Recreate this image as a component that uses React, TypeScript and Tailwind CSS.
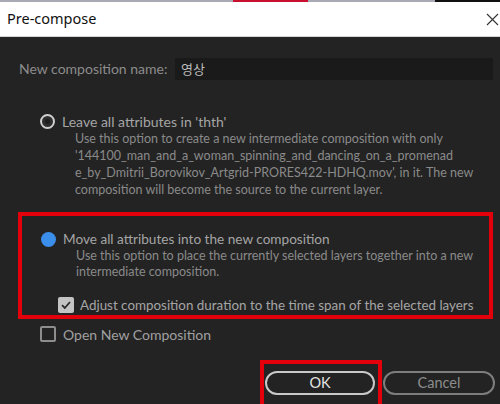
import React from "react";

function Radio({ checked }: { checked: boolean }) {
  if (checked) {
    return <div className="w-[15px] h-[15px] rounded-full bg-[#3b8eea] shrink-0" />;
  }
  return (
    <div className="w-[15px] h-[15px] rounded-full border-[2px] border-[#cfcfcf] bg-[#2e2e2e] shrink-0 flex items-center justify-center">
      <div className="w-[5px] h-[5px] rounded-full bg-[#1e1e1e]" />
    </div>
  );
}

function Check({ checked }: { checked: boolean }) {
  if (checked) {
    return (
      <div className="w-[16px] h-[16px] rounded-[2px] bg-[#c4c4c4] shrink-0 flex items-center justify-center">
        <svg width="12" height="12" viewBox="0 0 12 12">
          <path d="M2 6.2 L4.8 9 L10 3" stroke="#2a2a2a" strokeWidth="1.8" fill="none" />
        </svg>
      </div>
    );
  }
  return <div className="w-[16px] h-[16px] rounded-[2px] border-[2px] border-[#8d8d8d] shrink-0" />;
}

export default function App() {
  return (
    <div className="w-[500px] h-[404px] overflow-hidden bg-[#232323] flex flex-col" style={{ fontFamily: "Lato, 'Noto Sans', sans-serif" }}>
      {/* top strip */}
      <div className="h-[2px] flex shrink-0">
        <div className="w-[233px] bg-[#a9a9b6]" />
        <div className="w-[75px] bg-[#c8102e]" />
        <div className="w-[127px] bg-[#a9a9b6]" />
        <div className="flex-1 bg-[#111111]" />
      </div>
      {/* title bar */}
      <div className="h-[34px] bg-white flex items-center justify-between pl-[7px] pr-[1px] shrink-0">
        <span className="text-[14.5px] text-[#111]" style={{ fontFamily: "'Noto Sans', 'Open Sans', sans-serif" }}>Pre-compose</span>
        <svg width="13" height="13" viewBox="0 0 13 13">
          <path d="M1 1 L12 12 M12 1 L1 12" stroke="#333" strokeWidth="1.1" />
        </svg>
      </div>
      <div className="h-[1px] bg-[#d4d4d4] shrink-0" />
      {/* body */}
      <div className="flex flex-col pt-[21px]">
        <div className="flex items-center h-[22px]">
          <span className="pl-[19px] w-[175px] text-[14px] text-[#8c8c8c] leading-none">New composition name:</span>
          <div className="w-[318px] h-[22px] bg-[#1a1a1a] flex items-center pl-[6px] text-[13px] text-[#bdbdbd]" style={{ fontFamily: "'Noto Sans CJK KR', sans-serif" }}>영상</div>
        </div>

        <div className="mt-[32px] pl-[40px] pr-[10px]">
          <div className="flex items-center h-[18px] gap-[7px]">
            <Radio checked={false} />
            <span className="text-[14px] text-[#a5a5a5] whitespace-nowrap">Leave all attributes in 'thth'</span>
          </div>
          <div className="pl-[35px] text-[12.5px] leading-[17px] text-[#8a8a8a]">
            Use this option to create a new intermediate composition with only<br />
            '144100_man_and_a_woman_spinning_and_dancing_on_a_promenad<br />
            e_by_Dmitrii_Borovikov_Artgrid-PRORES422-HDHQ.mov', in it. The new<br />
            composition will become the source to the current layer.
          </div>
        </div>

        <div className="mt-[14px] ml-[18px] w-[475px] h-[107px] border-[4px] border-[#e3000b] flex flex-col pt-[14px]">
          <div className="pl-[19px]">
            <div className="flex items-center h-[18px] gap-[7px]">
              <Radio checked={true} />
              <span className="text-[13.6px] text-[#a5a5a5] whitespace-nowrap">Move all attributes into the new composition</span>
            </div>
            <div className="pl-[35px] text-[12.5px] leading-[16px] text-[#8a8a8a] whitespace-nowrap">
              Use this option to place the currently selected layers together into a new<br />
              intermediate composition.
            </div>
          </div>
          <div className="mt-[16px] pl-[36px] flex items-center gap-[6px] h-[18px]">
            <Check checked={true} />
            <span className="text-[13.4px] text-[#a5a5a5] whitespace-nowrap">Adjust composition duration to the time span of the selected layers</span>
          </div>
        </div>

        <div className="mt-[6px] pl-[40px] flex items-center gap-[7px] h-[18px]">
          <Check checked={false} />
          <span className="text-[14px] text-[#a0a0a0] whitespace-nowrap">Open New Composition</span>
        </div>

        <div className="mt-[17px] flex items-start pl-[260px]">
          <div className="w-[122px] h-[48px] border-[4px] border-[#e3000b] pt-[7px] pl-[1px]">
            <div className="w-[110px] h-[24px] rounded-full border-[2px] border-[#c9c9c9] flex items-center justify-center text-[14.5px] text-[#e2e2e2]">OK</div>
          </div>
          <div className="ml-[1px] mt-[11px] w-[112px] h-[24px] rounded-full border-[2px] border-[#7d7d7d] flex items-center justify-center text-[14.5px] text-[#8c8c8c]">Cancel</div>
        </div>
      </div>
    </div>
  );
}
